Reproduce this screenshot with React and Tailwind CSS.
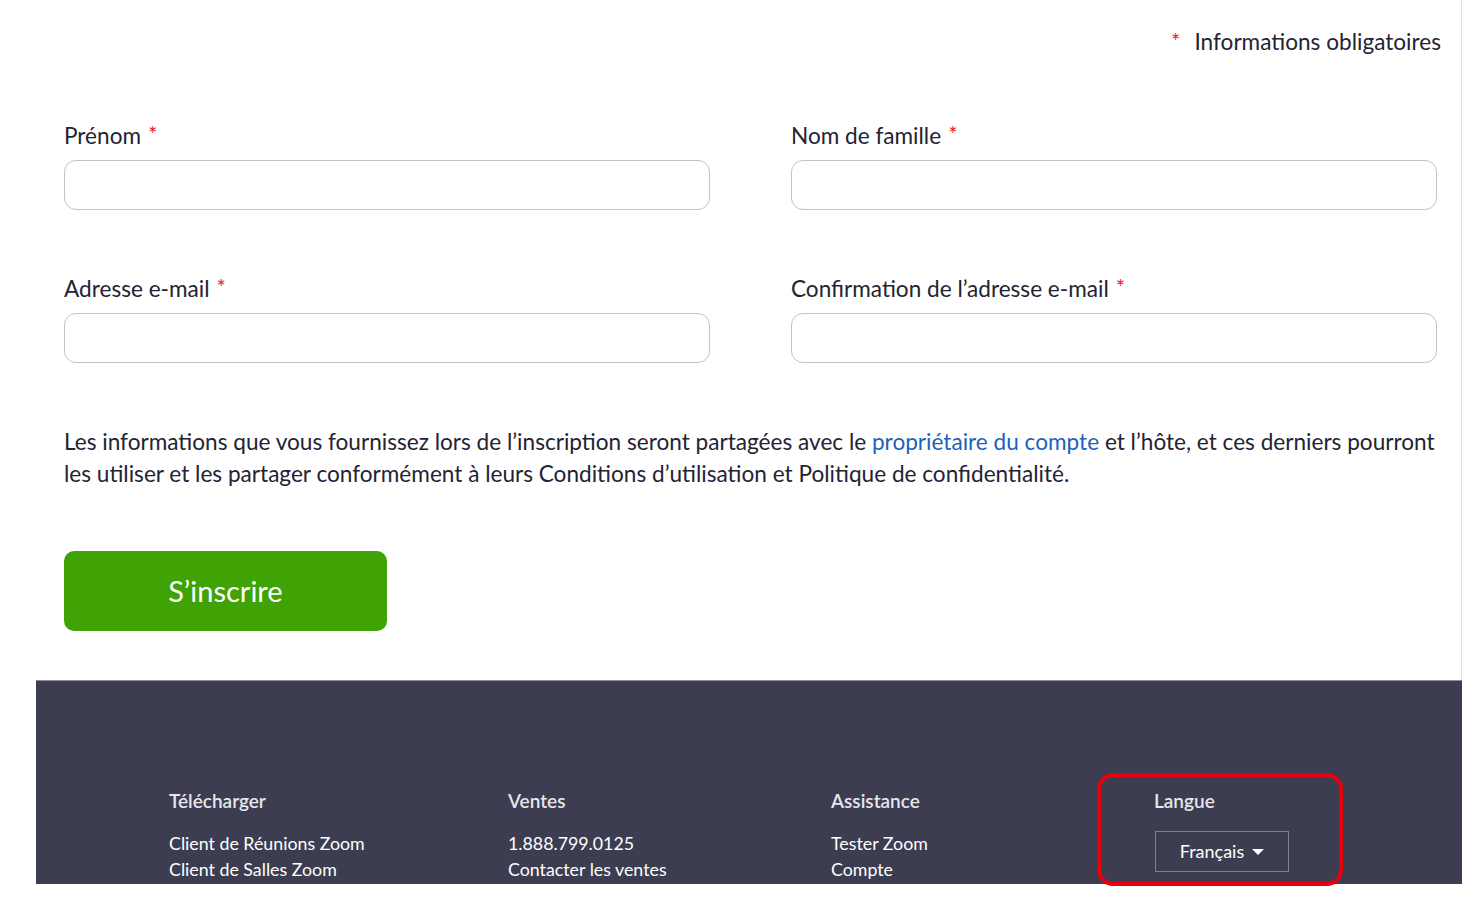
import React from 'react'

const FONT = { fontFamily: 'Lato, "Open Sans", sans-serif' }

function Star() {
  return <span className="text-[#e0262b] text-[22px] leading-none ml-[7px] relative top-[-2px]">*</span>
}

function Field({ label }) {
  return (
    <div className="flex flex-col">
      <label className="text-[22.6px] leading-[32px] text-[#232333]">
        {label}
        <Star />
      </label>
      <div className="mt-2 h-[50px] rounded-[12px] border-[1.5px] border-[#c2c2cd] bg-white" />
    </div>
  )
}

const FOOTER = [
  { title: 'Télécharger', items: ['Client de Réunions Zoom', 'Client de Salles Zoom'], w: 'w-[339px]' },
  { title: 'Ventes', items: ['1.888.799.0125', 'Contacter les ventes'], w: 'w-[323px]' },
  { title: 'Assistance', items: ['Tester Zoom', 'Compte'], w: 'w-[323px]' },
]

export default function App() {
  return (
    <div className="relative w-[1476px] h-[906px] bg-white overflow-hidden" style={FONT}>
      <div className="ml-[36px] w-[1426px]">
        {/* Form */}
        <div className="border-r border-[#e4e4df] pl-[28px] pr-[24px] pt-[26px] pb-[49px]">
          <div className="flex justify-end -mr-1 text-[22.6px] leading-[32px] text-[#232333]">
            <span className="text-[#e0262b] text-[22px] leading-none relative top-[4px] mr-[14px]">*</span>
            Informations obligatoires
          </div>

          <div className="mt-[62px] grid grid-cols-2 gap-x-[81px] gap-y-[63px]">
            <Field label="Prénom" />
            <Field label="Nom de famille" />
            <Field label="Adresse e-mail" />
            <Field label="Confirmation de l’adresse e-mail" />
          </div>

          <p className="mt-[63px] text-[22.6px] leading-[32px] text-[#232333]">
            Les informations que vous fournissez lors de l’inscription seront partagées avec le{' '}
            <span className="text-[#1d61bb]">propriétaire du compte</span> et l’hôte, et ces derniers pourront
            les utiliser et les partager conformément à leurs Conditions d’utilisation et Politique de confidentialité.
          </p>

          <button className="mt-[61px] w-[323px] h-[80px] rounded-[10px] bg-[#3fa305] text-white text-[29px]">
            S’inscrire
          </button>
        </div>

        {/* Footer */}
        <div className="h-[204px] bg-[#3c3d50] border-t border-[#8d8d9c] pl-[133px] pt-[108px] flex overflow-hidden">
          {FOOTER.map((col) => (
            <div key={col.title} className={col.w}>
              <div className="text-[19px] leading-[24px] font-semibold text-[#e6e6ec]">{col.title}</div>
              <div className="mt-[17px] flex flex-col text-[17.8px] leading-[26px] text-white">
                {col.items.map((it) => (
                  <span key={it}>{it}</span>
                ))}
              </div>
            </div>
          ))}
          <div>
            <div className="text-[19px] leading-[24px] font-semibold text-[#e6e6ec]">Langue</div>
            <div className="mt-[18px] ml-[1px] w-[134px] h-[41px] border border-[#7d7e8f] flex items-center justify-center gap-[8px] text-[18px] text-white">
              Français
              <svg width="12" height="7" viewBox="0 0 12 7" className="mt-[2px]">
                <path d="M0 0 L12 0 L6 6 Z" fill="white" />
              </svg>
            </div>
          </div>
        </div>
      </div>

      {/* Highlight annotation */}
      <div className="absolute left-[1097px] top-[773px] w-[246px] h-[113px] border-[4px] border-[#e8000b] rounded-[16px] pointer-events-none" />
    </div>
  )
}
